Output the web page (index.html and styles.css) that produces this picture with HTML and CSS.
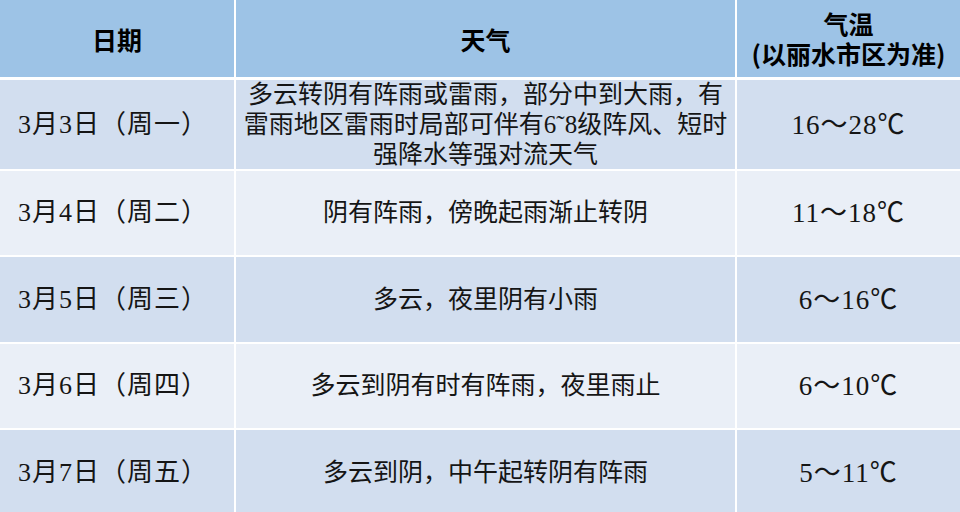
FILE: index.html
```html
<!DOCTYPE html>
<html lang="zh-CN">
<head>
<meta charset="utf-8">
<title>丽水天气预报</title>
<link rel="stylesheet" href="styles.css">
</head>
<body>
<div class="forecast">
  <div class="cell head">日期</div>
  <div class="cell head">天气</div>
  <div class="cell head head-two"><span>气温</span><span>(以丽水市区为准)</span></div>

  <div class="cell odd date">3月3日（周一）</div>
  <div class="cell odd wx">多云转阴有阵雨或雷雨，部分中到大雨，有<br>雷雨地区雷雨时局部可伴有6˜8级阵风、短时<br>强降水等强对流天气</div>
  <div class="cell odd temp">16～28℃</div>

  <div class="cell even date">3月4日（周二）</div>
  <div class="cell even wx">阴有阵雨，傍晚起雨渐止转阴</div>
  <div class="cell even temp">11～18℃</div>

  <div class="cell odd date">3月5日（周三）</div>
  <div class="cell odd wx">多云，夜里阴有小雨</div>
  <div class="cell odd temp">6～16℃</div>

  <div class="cell even date">3月6日（周四）</div>
  <div class="cell even wx">多云到阴有时有阵雨，夜里雨止</div>
  <div class="cell even temp">6～10℃</div>

  <div class="cell odd date">3月7日（周五）</div>
  <div class="cell odd wx">多云到阴，中午起转阴有阵雨</div>
  <div class="cell odd temp">5～11℃</div>
</div>
</body>
</html>
```
FILE: styles.css
```css
html, body {
  margin: 0;
  padding: 0;
  background: #ffffff;
}

.forecast {
  display: grid;
  grid-template-columns: 234px 499px 223px;
  grid-template-rows: 78px 89px 84px 85px 84px 85px;
  column-gap: 2px;
  row-gap: 2px;
  width: 960px;
  background: #ffffff;
  font-family: "Liberation Serif", "Noto Sans CJK SC", serif;
  font-size: 25px;
  color: #151515;
}

.cell {
  display: flex;
  align-items: center;
  justify-content: center;
  text-align: center;
  line-height: 30px;
}

.head {
  background: #9dc3e6;
  border-bottom: 1px solid #ffffff;
  font-family: "Noto Sans CJK SC", "Liberation Sans", sans-serif;
  font-weight: 700;
  font-size: 25px;
  color: #000000;
}

.head-two {
  flex-direction: column;
  gap: 0;
  line-height: 30px;
  padding-bottom: 2px;
}

.odd {
  background: #d2deef;
}

.even {
  background: #eaeff7;
}

.date {
  font-size: 26px;
  letter-spacing: 1px;
  padding-right: 8px;
}

.wx {
  line-height: 30px;
}

.temp {
  font-size: 27px;
  letter-spacing: 1px;
}
```
